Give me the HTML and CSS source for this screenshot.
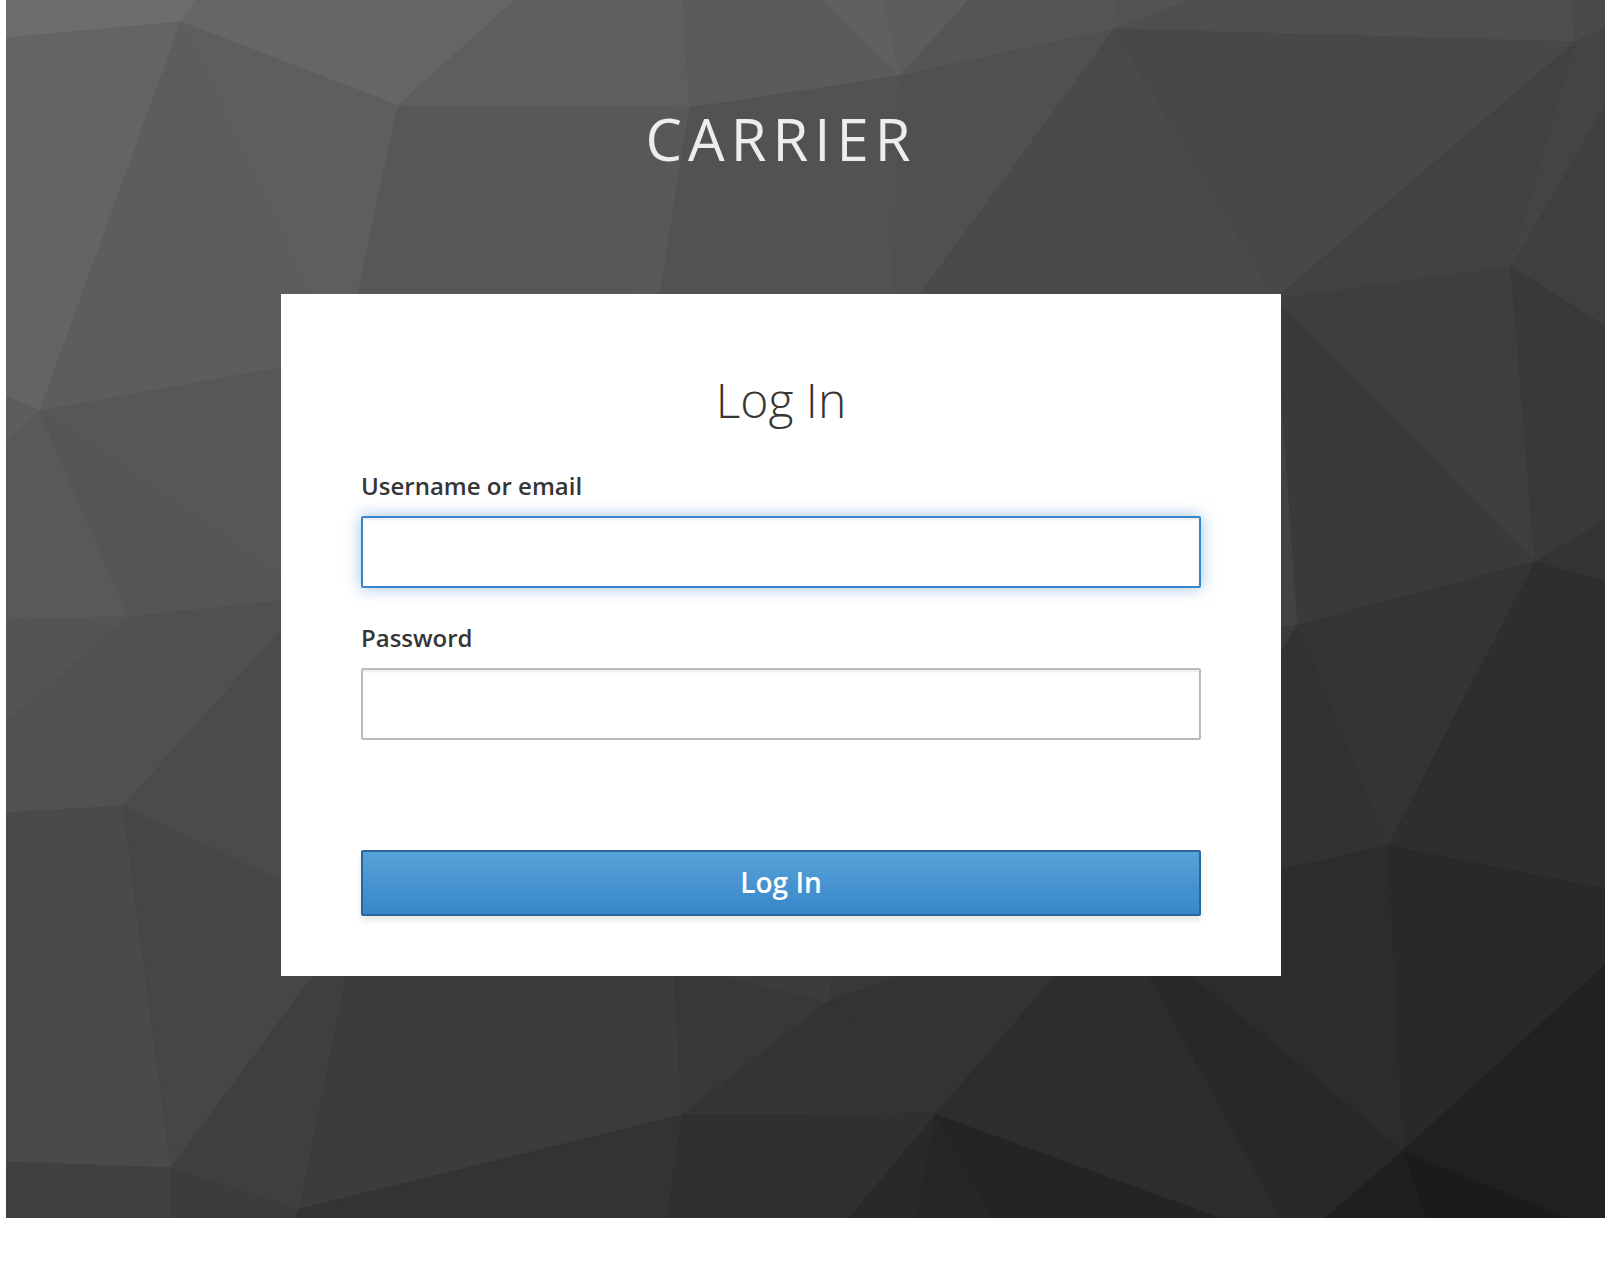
FILE: index.html
```html
<!DOCTYPE html>
<html lang="en">
<head>
<meta charset="utf-8">
<meta name="viewport" content="width=device-width, initial-scale=1">
<title>Log in to Carrier</title>
<link rel="stylesheet" href="styles.css">
</head>
<body>
<div class="login-page">
  <svg class="backdrop" viewBox="6 0 1599 1218" preserveAspectRatio="none" aria-hidden="true">
    <!-- top row -->
    <polygon color="#6d6d6d" points="6,0 196,0 181,22 6,38"/>
    <polygon color="#666666" points="196,0 377,0 398,105 181,22"/>
    <polygon color="#656565" points="377,0 515,0 398,105"/>
    <polygon color="#5e5e5e" points="515,0 683,0 690,108 398,106"/>
    <polygon color="#5b5b5b" points="683,0 822,0 900,76 690,108"/>
    <polygon color="#606060" points="822,0 885,0 900,76"/>
    <polygon color="#5d5d5d" points="885,0 969,0 900,76"/>
    <polygon color="#555555" points="969,0 1117,0 1114,29 900,76"/>
    <polygon color="#535353" points="1117,0 1191,0 1114,29"/>
    <polygon color="#4e4e4e" points="1191,0 1572,0 1575,42 1114,29"/>
    <polygon color="#4a4a4a" points="1572,0 1605,0 1605,28 1575,42"/>
    <!-- second row -->
    <polygon color="#646464" points="6,38 181,22 40,411 6,396"/>
    <polygon color="#5d5d5d" points="181,22 330,340 330,359 40,411"/>
    <polygon color="#5e5e5e" points="181,22 398,106 346,350 330,340"/>
    <polygon color="#585858" points="398,106 690,108 658,310"/>
    <polygon color="#575757" points="398,106 658,310 651,350 346,350"/>
    <polygon color="#525252" points="690,108 900,76 892,350 651,350"/>
    <polygon color="#505050" points="900,76 1114,29 880,347 892,350"/>
    <polygon color="#4a4a4a" points="1114,29 1275,299 1275,350 880,350"/>
    <polygon color="#484848" points="1114,29 1575,42 1275,299"/>
    <polygon color="#424242" points="1575,42 1511,267 1275,299"/>
    <polygon color="#444444" points="1575,42 1605,28 1605,107 1511,267"/>
    <polygon color="#3f3f3f" points="1605,107 1605,326 1511,267"/>
    <!-- right side -->
    <polygon color="#3e3e3e" points="1511,267 1535,562 1275,299"/>
    <polygon color="#393939" points="1511,267 1605,326 1605,521 1535,562"/>
    <polygon color="#424242" points="1275,299 1298,625 1240,636 1240,299"/>
    <polygon color="#3a3a3a" points="1275,299 1535,562 1298,625"/>
    <polygon color="#3b3b3b" points="1298,625 1240,718 1240,636"/>
    <polygon color="#323232" points="1298,625 1388,846 1240,879 1240,718"/>
    <polygon color="#343434" points="1298,625 1535,562 1388,846"/>
    <polygon color="#343434" points="1535,562 1605,521 1605,581"/>
    <polygon color="#2e2e2e" points="1535,562 1605,581 1605,889 1388,846"/>
    <polygon color="#292929" points="1388,846 1605,889 1605,965 1403,1151"/>
    <polygon color="#2c2c2c" points="1388,846 1403,1151 1193,976 1100,900 1240,879"/>
    <!-- left side -->
    <polygon color="#5d5d5d" points="6,396 40,411 6,443"/>
    <polygon color="#595959" points="6,443 40,411 129,617 6,620"/>
    <polygon color="#575757" points="40,411 330,359 330,598 310,598"/>
    <polygon color="#555555" points="40,411 310,598 129,617"/>
    <polygon color="#545454" points="6,620 129,617 6,723"/>
    <polygon color="#515151" points="6,723 129,617 123,806 6,813"/>
    <polygon color="#505050" points="129,617 310,598 123,806"/>
    <polygon color="#4b4b4b" points="123,806 310,598 340,910"/>
    <polygon color="#4a4a4a" points="6,813 123,806 171,1168 6,1162"/>
    <polygon color="#464646" points="123,806 340,910 340,940 171,1168"/>
    <!-- bottom row -->
    <polygon color="#404040" points="6,1162 171,1168 172,1218 6,1218"/>
    <polygon color="#3c3c3c" points="171,1168 300,1209 295,1218 172,1218"/>
    <polygon color="#3f3f3f" points="171,1168 340,940 354,940 300,1209"/>
    <polygon color="#3c3c3c" points="300,1209 354,940 673,940 682,1115"/>
    <polygon color="#333333" points="682,1115 668,1218 295,1218 300,1209"/>
    <polygon color="#383838" points="674,964 682,1115 828,1002"/>
    <polygon color="#3c3c3c" points="674,964 828,1002 840,940 674,940"/>
    <polygon color="#383838" points="828,1002 840,940 1015,940"/>
    <polygon color="#343434" points="828,1002 936,1114 682,1115"/>
    <polygon color="#333333" points="828,1002 1121,900 936,1114"/>
    <polygon color="#303030" points="682,1115 936,1114 849,1218 668,1218"/>
    <polygon color="#292929" points="936,1114 917,1218 849,1218"/>
    <polygon color="#262626" points="936,1114 993,1218 917,1218"/>
    <polygon color="#242424" points="936,1114 1222,1218 993,1218"/>
    <polygon color="#2d2d2d" points="936,1114 1121,900 1108,900 1281,1218 1222,1218"/>
    <polygon color="#282828" points="1403,1151 1325,1218 1281,1218 1108,900 1100,900"/>
    <polygon color="#1f1f1f" points="1403,1151 1427,1218 1325,1218"/>
    <polygon color="#1b1b1b" points="1403,1151 1570,1218 1427,1218"/>
    <polygon color="#212121" points="1605,965 1605,1218 1570,1218 1403,1151"/>
  </svg>

  <header class="brand">Carrier</header>

  <main class="card">
    <h1 class="card-title">Log In</h1>
    <form class="login-form">
      <div class="field">
        <label class="field-label" for="username">Username or email</label>
        <input class="field-input is-active" id="username" name="username" type="text" autocomplete="username">
      </div>
      <div class="field">
        <label class="field-label" for="password">Password</label>
        <input class="field-input" id="password" name="password" type="password" autocomplete="current-password">
      </div>
      <button class="submit" type="submit">Log In</button>
    </form>
  </main>
</div>
</body>
</html>
```
FILE: styles.css
```css
*,
*::before,
*::after {
  box-sizing: border-box;
}

body {
  margin: 0 7px 62px 6px;
  background: #fff;
  color: #363636;
  font-family: "Open Sans", "Noto Sans", sans-serif;
  font-size: 24px;
}

.login-page {
  position: relative;
  display: flex;
  flex-direction: column;
  align-items: center;
  padding: 100px 49px 242px 0;
  background: #4a4a4a;
}

.backdrop {
  position: absolute;
  inset: 0;
  width: 100%;
  height: 100%;
}

/* The stroke closes the hairline gaps between neighbouring facets. */
.backdrop polygon {
  fill: currentColor;
  stroke: currentColor;
  stroke-width: 1;
  stroke-linejoin: round;
}

.brand {
  position: relative;
  padding-bottom: 116px;
  color: #ededed;
  font-size: 58px;
  line-height: 78px;
  letter-spacing: 6px;
  text-transform: uppercase;
}

.card {
  position: relative;
  width: 100%;
  max-width: 1000px;
  padding: 72px 80px 60px;
  background: #fff;
}

.card-title {
  margin: 0 0 34px;
  font-size: 48px;
  font-weight: 300;
  line-height: 68px;
  text-align: center;
}

.login-form {
  display: flex;
  flex-direction: column;
  gap: 32px;
}

.field {
  display: flex;
  flex-direction: column;
  gap: 12px;
}

.field-label {
  font-weight: 600;
  line-height: 36px;
}

.field-input {
  width: 100%;
  height: 72px;
  padding: 4px 12px;
  border: 2px solid #bbb;
  border-radius: 2px;
  outline: 0;
  background: #fff;
  box-shadow: inset 0 2px 2px rgba(3, 3, 3, 0.075);
  color: inherit;
  font: inherit;
}

.field-input:focus,
.field-input.is-active {
  border-color: #3987cb;
  box-shadow: inset 0 2px 2px rgba(3, 3, 3, 0.075), 0 0 16px rgba(57, 135, 203, 0.5);
}

.submit {
  height: 66px;
  margin-top: 78px;
  padding: 0 12px 2px;
  border: 2px solid #2a669c;
  border-radius: 2px;
  background: linear-gradient(#57a3d8, #3986ca);
  box-shadow: 0 4px 6px rgba(3, 3, 3, 0.1);
  color: #fff;
  font: inherit;
  font-size: 28px;
  font-weight: 600;
  line-height: 40px;
  cursor: pointer;
}
```
